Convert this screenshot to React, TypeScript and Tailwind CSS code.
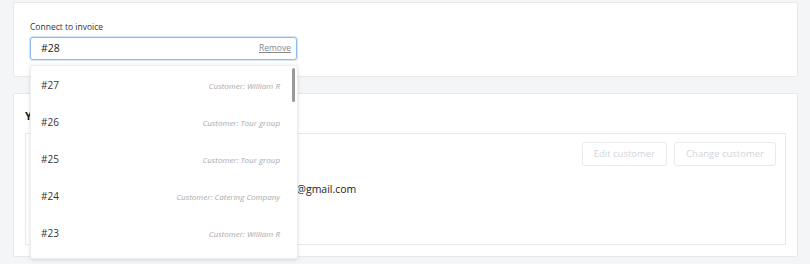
import React from "react";

const items = [
  { id: "#27", customer: "Customer: William R" },
  { id: "#26", customer: "Customer: Tour group" },
  { id: "#25", customer: "Customer: Tour group" },
  { id: "#24", customer: "Customer: Catering Company" },
  { id: "#23", customer: "Customer: William R" },
];

export default function App() {
  return (
    <div
      className="w-[810px] h-[264px] overflow-hidden bg-[#f4f5f7] pt-[2px] pl-[13px] pr-[12px] text-[#333]"
      style={{ fontFamily: '"Open Sans", "Liberation Sans", sans-serif' }}
    >
      <div className="h-[75px] bg-white border border-[#e6e8eb] rounded-[2px] px-[16px] pt-[18px]">
        <div className="text-[8.5px] leading-[12px] text-[#333] mb-[4px]">Connect to invoice</div>
        <div className="relative w-[267px]">
          <div className="h-[23px] border border-[#8fbcf2] rounded-[3px] shadow-[0_0_0_1px_#d3e5fb] flex items-center justify-between pl-[10px] pr-[5px] bg-white">
            <span className="text-[10.5px] text-[#222]">#28</span>
            <span className="text-[8.5px] text-[#888] underline">Remove</span>
          </div>
          <div className="absolute left-0 top-[28px] w-[268px] h-[194px] bg-white rounded-[3px] border border-[#eceef0] shadow-[0_1px_4px_rgba(0,0,0,0.12)] overflow-hidden z-10 pt-[1px]">
            <div className="absolute right-[2px] top-[2px] w-[3px] h-[34px] rounded-full bg-[#9a9a9a]" />
            {items.map((it) => (
              <div key={it.id} className="h-[37px] flex items-center justify-between pl-[10px] pr-[17px]">
                <span className="text-[10px] text-[#333]">{it.id}</span>
                <span className="text-[8px] italic text-[#aaa]">{it.customer}</span>
              </div>
            ))}
          </div>
        </div>
      </div>

      <div className="mt-[16px] h-[164px] bg-white border border-[#e6e8eb] rounded-[2px] px-[11px] pt-[15px]">
        <div className="text-[11px] font-bold leading-[14px] text-[#222] mb-[10px]">Your customer</div>
        <div className="h-[112px] border border-[#e6e8eb] flex justify-between pr-[9px] pt-[8px]">
          <div className="pl-[207px] pt-[40px] text-[10.5px] text-[#222] whitespace-nowrap">
            williamphoto@gmail.com
          </div>
          <div className="flex gap-[7px]">
            <div className="h-[24px] px-[11px] border border-[#e8eaed] rounded-[3px] flex items-center text-[9.5px] text-[#d2d5da]">
              Edit customer
            </div>
            <div className="h-[24px] px-[11px] border border-[#e8eaed] rounded-[3px] flex items-center text-[9.5px] text-[#d2d5da]">
              Change customer
            </div>
          </div>
        </div>
      </div>
    </div>
  );
}
